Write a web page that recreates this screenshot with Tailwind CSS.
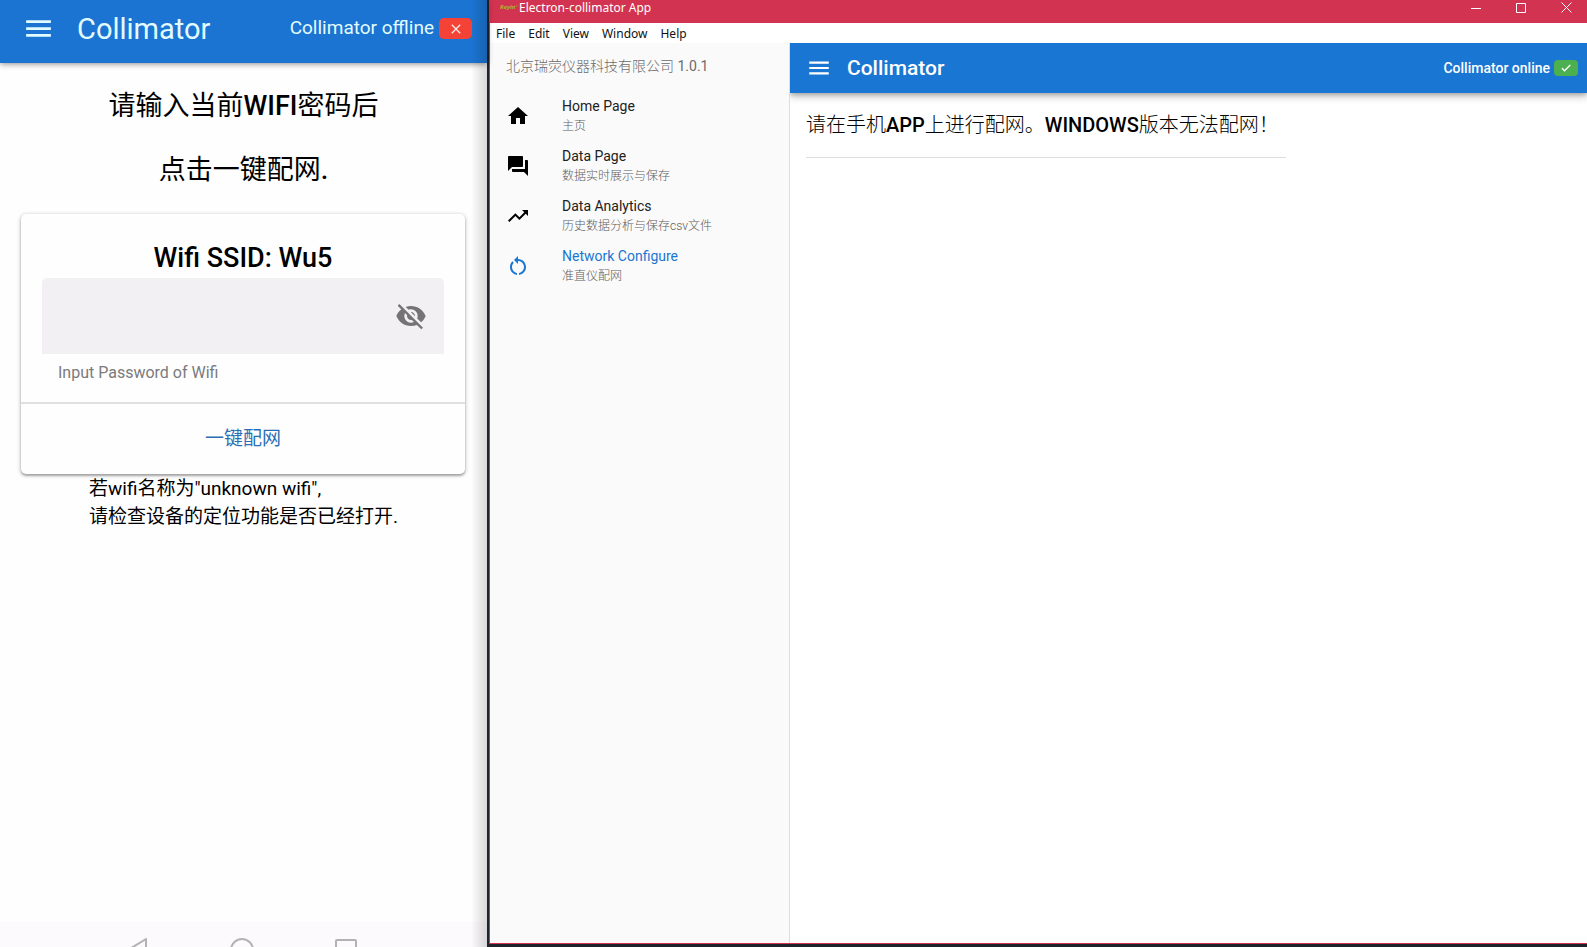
<!DOCTYPE html>
<html lang="zh-CN">
<head>
<meta charset="utf-8">
<title>Collimator</title>
<script src="https://cdn.jsdelivr.net/npm/@tailwindcss/browser@4"></script>
</head>
<body class="flex h-screen overflow-hidden bg-[#1f232b] font-[Roboto,'Noto_Sans_CJK_SC',sans-serif] text-black">

<!-- Phone screen -->
<section class="relative flex w-[487px] shrink-0 flex-col bg-[#fefefe]">
  <header class="flex h-[63px] items-center bg-[#1b74d2] pr-[15px] pb-[6px] pl-[22px] text-[#e3fbff] shadow-[0_1px_6px_rgba(0,0,0,0.45)]">
    <button type="button" aria-label="Menu" class="shrink-0">
      <svg class="size-[33px]" viewBox="0 0 24 24" fill="currentColor"><path d="M3 18h18v-2H3v2zm0-5h18v-2H3v2zm0-7v2h18V6H3z"/></svg>
    </button>
    <h1 class="ml-[22px] flex-1 text-[29px] leading-8">Collimator</h1>
    <span class="text-[19px]">Collimator offline</span>
    <span class="ml-[5px] flex h-[21px] w-[33px] items-center justify-center rounded-[5px] bg-[#f44336]">
      <svg class="size-4" viewBox="0 0 24 24" fill="#ffe9e4"><path d="M19 6.41L17.59 5 12 10.59 6.41 5 5 6.41 10.59 12 5 17.59 6.41 19 12 13.41 17.59 19 19 17.59 13.41 12z"/></svg>
    </span>
  </header>

  <main class="flex flex-1 flex-col">
    <div class="flex flex-col gap-6 pt-[23px] text-center text-[27px] leading-10">
      <p>请输入当前<span class="font-medium">WIFI</span>密码后</p>
      <p>点击一键配网<span class="font-medium">.</span></p>
    </div>
    <form class="mr-[22px] ml-[21px] mt-6 rounded-[5px] bg-[#fefefe] shadow-[0_1px_4px_rgba(0,0,0,0.3),0_2px_2px_rgba(0,0,0,0.2)]">
      <div class="px-[21px] pt-6">
        <h2 class="text-center text-[27px] leading-10 font-medium">Wifi SSID: Wu5</h2>
        <div class="flex h-[76px] items-center rounded-t-[5px] bg-[#f2f0f3] pr-[17px]">
          <input id="pw" type="password" class="h-full min-w-0 flex-1 bg-transparent px-4 text-xl outline-none">
          <button type="button" aria-label="Show password" class="text-[#757376]">
            <svg class="size-8" viewBox="0 0 24 24" fill="currentColor"><path d="M12 7c2.76 0 5 2.24 5 5 0 .65-.13 1.26-.36 1.83l2.92 2.92c1.51-1.26 2.7-2.89 3.43-4.75-1.73-4.39-6-7.5-11-7.5-1.4 0-2.74.25-3.98.7l2.16 2.16C10.74 7.13 11.35 7 12 7zM2 4.27l2.28 2.28.46.46C3.08 8.3 1.78 10.02 1 12c1.73 4.39 6 7.5 11 7.5 1.55 0 3.03-.3 4.38-.84l.42.42L19.73 22 21 20.73 3.27 3 2 4.27zM7.53 9.8l1.55 1.55c-.05.21-.08.43-.08.65 0 1.66 1.34 3 3 3 .22 0 .44-.03.65-.08l1.55 1.55c-.67.33-1.41.53-2.2.53-2.76 0-5-2.24-5-5 0-.79.2-1.53.53-2.2zm4.31-.78l3.15 3.15.02-.16c0-1.66-1.34-3-3-3l-.17.01z"/></svg>
          </button>
        </div>
        <label for="pw" class="block px-4 pt-2 pb-[18px] text-base leading-[22px] text-[#7b7a7c]">Input Password of Wifi</label>
      </div>
      <div class="flex h-[72px] items-center justify-center border-t-2 border-[#dfdee0]">
        <button type="submit" class="text-[19px] text-[#2a6fb5]">一键配网</button>
      </div>
    </form>
    <p class="mt-px ml-[89px] text-[19px] leading-7">若wifi名称为"unknown wifi",<br>请检查设备的定位功能是否已经打开.</p>
  </main>

  <nav class="flex h-[25px] items-start justify-between overflow-hidden bg-[#fcfafd] pr-[130px] pl-[126px] text-[#b3b1b4]">
    <button type="button" aria-label="Back" class="pt-4"><svg class="h-6 w-[23px]" viewBox="0 0 23 24" fill="none" stroke="currentColor" stroke-width="2" stroke-linejoin="round"><path d="M20 1v22L2 12z"/></svg></button>
    <button type="button" aria-label="Home" class="pt-4"><svg class="size-6" viewBox="0 0 24 24" fill="none" stroke="currentColor" stroke-width="2"><circle cx="12" cy="12" r="11"/></svg></button>
    <button type="button" aria-label="Recent apps" class="pt-[17px]"><svg class="size-[22px]" viewBox="0 0 22 22" fill="none" stroke="currentColor" stroke-width="2"><rect x="1" y="1" width="20" height="20" rx="1"/></svg></button>
  </nav>
  <div class="pointer-events-none absolute inset-y-0 right-0 w-4 bg-linear-to-r from-black/0 to-black/15"></div>
</section>

<!-- Desktop window -->
<section class="mb-[3px] ml-[2px] flex min-w-0 flex-1 flex-col border-b border-l border-[#d23350] bg-white">
  <div class="flex h-[23px] shrink-0 items-start bg-[#d23350] pr-[15px] pl-2 text-white">
    <span class="w-[21px] pt-px text-center font-['Noto_Sans',sans-serif] text-[6px] leading-3 font-bold text-[#a8b52e] italic">Reyin'</span>
    <span class="flex-1 font-['Noto_Sans','Noto_Sans_CJK_SC',sans-serif] text-xs leading-4">Electron-collimator App</span>
    <div class="flex gap-[35px] pt-[2px]">
      <button type="button" aria-label="Minimize"><svg class="size-[10px]" viewBox="0 0 10 10" stroke="currentColor"><path d="M0 5.5h10"/></svg></button>
      <button type="button" aria-label="Maximize"><svg class="size-[10px]" viewBox="0 0 10 10" fill="none" stroke="currentColor"><path d="M.5.5h9v9h-9z"/></svg></button>
      <button type="button" aria-label="Close"><svg class="size-[11px]" viewBox="0 0 11 11" stroke="currentColor"><path d="M.5.5l10 10M10.5.5l-10 10"/></svg></button>
    </div>
  </div>
  <div class="flex h-5 shrink-0 items-center gap-[13px] px-[6px] pt-px font-['Noto_Sans',sans-serif] text-xs text-[#111]">
    <button type="button">File</button>
    <button type="button">Edit</button>
    <button type="button">View</button>
    <button type="button">Window</button>
    <button type="button">Help</button>
  </div>

  <div class="flex min-h-0 flex-1">
    <aside class="w-[300px] shrink-0 border-r border-[#dddddd] bg-[#fafafa]">
      <p class="h-12 px-4 pt-3 text-sm leading-[22px] text-[#6b6b6b]"><span class="font-light">北京瑞荧仪器科技有限公司</span> 1.0.1</p>
      <nav>
        <a href="#" class="flex h-[50px] items-center gap-8 px-4">
          <svg class="size-6" viewBox="0 0 24 24" fill="currentColor"><path d="M10 20v-6h4v6h5v-8h3L12 3 2 12h3v8z"/></svg>
          <span class="flex flex-col text-sm leading-5 text-[#212121]">Home Page<span class="text-xs leading-5 font-light text-[#5c5c5c]">主页</span></span>
        </a>
        <a href="#" class="flex h-[50px] items-center gap-8 px-4">
          <svg class="size-6" viewBox="0 0 24 24" fill="currentColor"><path d="M21 6h-2v9H6v2c0 .55.45 1 1 1h11l4 4V7c0-.55-.45-1-1-1zm-4 6V3c0-.55-.45-1-1-1H3c-.55 0-1 .45-1 1v14l4-4h10c.55 0 1-.45 1-1z"/></svg>
          <span class="flex flex-col text-sm leading-5 text-[#212121]">Data Page<span class="text-xs leading-5 font-light text-[#5c5c5c]">数据实时展示与保存</span></span>
        </a>
        <a href="#" class="flex h-[50px] items-center gap-8 px-4">
          <svg class="size-6" viewBox="0 0 24 24" fill="currentColor"><path d="M16 6l2.29 2.29-4.88 4.88-4-4L2 16.59 3.41 18l6-6 4 4 6.3-6.29L22 12V6z"/></svg>
          <span class="flex flex-col text-sm leading-5 text-[#212121]">Data Analytics<span class="text-xs leading-5 font-light text-[#5c5c5c]">历史数据分析与保存csv文件</span></span>
        </a>
        <a href="#" aria-current="page" class="flex h-[50px] items-center gap-8 px-4 text-[#1976d2]">
          <svg class="size-6" viewBox="0 0 24 24" fill="currentColor"><path d="M12 5V2L8 6l4 4V7c3.31 0 6 2.69 6 6 0 2.97-2.17 5.43-5 5.91v2.02c3.95-.49 7-3.85 7-7.93 0-4.42-3.58-8-8-8zM6 13c0-1.65.67-3.15 1.76-4.24L6.34 7.34C4.9 8.79 4 10.79 4 13c0 4.08 3.05 7.44 7 7.93v-2.02c-2.83-.48-5-2.94-5-5.91z"/></svg>
          <span class="flex flex-col text-sm leading-5">Network Configure<span class="text-xs leading-5 font-light text-[#5c5c5c]">准直仪配网</span></span>
        </a>
      </nav>
    </aside>

    <div class="flex min-w-0 flex-1 flex-col overflow-hidden">
      <header class="flex h-[50px] shrink-0 items-center bg-[#1976d2] pr-[9px] pl-4 text-white shadow-[0_2px_4px_rgba(0,0,0,0.2),0_4px_8px_rgba(0,0,0,0.2)]">
        <button type="button" aria-label="Menu"><svg class="size-[26px]" viewBox="0 0 24 24" fill="currentColor"><path d="M3 18h18v-2H3v2zm0-5h18v-2H3v2zm0-7v2h18V6H3z"/></svg></button>
        <h1 class="ml-[15px] flex-1 pt-[2px] text-[21px] font-medium">Collimator</h1>
        <span class="text-sm font-medium">Collimator online</span>
        <span class="ml-1 flex h-4 w-6 items-center justify-center rounded-[4px] bg-[#4caf50]">
          <svg class="size-3" viewBox="0 0 24 24" fill="currentColor" stroke="currentColor"><path d="M9 16.17L4.83 12l-1.42 1.41L9 19 21 7l-1.41-1.41z"/></svg>
        </span>
      </header>
      <main class="p-4">
        <div class="max-w-[480px] border-b border-[#dddddd] pb-4">
          <h2 class="text-xl leading-8 font-light">请在手机<span class="font-medium">APP</span>上进行配网。<span class="font-medium">WINDOWS</span>版本无法配网！</h2>
        </div>
      </main>
    </div>
  </div>
</section>
</body>
</html>
